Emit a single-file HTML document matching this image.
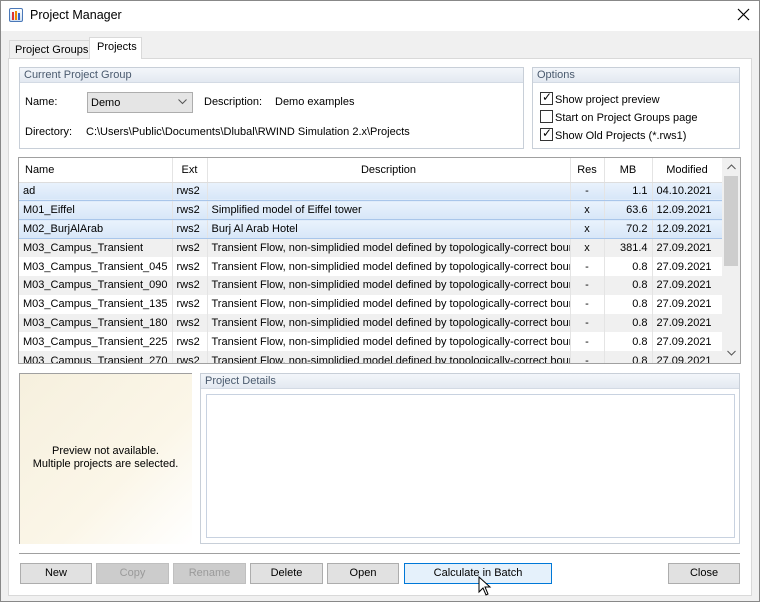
<!DOCTYPE html>
<html><head><style>
*{box-sizing:border-box;margin:0;padding:0}
body{width:760px;height:602px;background:#f0f0f0;font-family:"Liberation Sans",sans-serif;font-size:11px;color:#000;position:relative;overflow:hidden}
.a{position:absolute;white-space:nowrap}
.win{left:0;top:0;width:760px;height:602px;border:1px solid #888}
.title{left:1px;top:1px;width:758px;height:30px;background:#fff}
.pane{left:8px;top:58px;width:744px;height:538px;background:#fff;border:1px solid #d9d9d9}
.gb{border:1px solid #c8cfd8;background:#fff}
.gh{position:absolute;left:0;top:0;right:0;height:15px;background:linear-gradient(#f3f6fa,#e3e9f1);border-bottom:1px solid #d3dae4;color:#4a5a6e;padding-left:4px;line-height:14px}
.btn{position:absolute;top:563px;height:21px;border:1px solid #adadad;background:#e1e1e1;text-align:center;line-height:19px}
.dis{color:#9a9a9a;background:#ccc;border-color:#bfbfbf}
.tw{position:absolute;left:19px;top:158px;width:703px;height:205px;overflow:hidden}
table{border-collapse:collapse;width:703px;table-layout:fixed}
td{height:18.8px;padding:0 4px;white-space:nowrap;overflow:hidden;border-right:1px solid #e4e4e4;text-overflow:clip}
th{height:24px;font-weight:normal;border-right:1px solid #e4e4e4;border-bottom:1px solid #ddd}
tr.s td{background:linear-gradient(#e9f2fc,#d7e6f8);border-top:1px solid #a9c6ea;border-bottom:1px solid #a9c6ea}
tr.g td{background:#f0f0f0}
.r{text-align:right}.c{text-align:center}
.cb{display:inline-block;width:13px;height:13px;border:1px solid #333;vertical-align:-2px;margin-right:2px;position:relative}
</style></head><body>
<div class="a win"></div>
<div class="a title"></div>
<div class="a" style="left:9px;top:8px;width:14px;height:14px;border:1px solid #4a78b8;background:linear-gradient(#fff,#cfe0f4);border-radius:2px">
<div class="a" style="left:2px;top:3px;width:2px;height:8px;background:#d33"></div><div class="a" style="left:5px;top:2px;width:2px;height:9px;background:#e80"></div><div class="a" style="left:8px;top:4px;width:2px;height:7px;background:#36c"></div></div>
<div class="a" style="left:30px;top:8px;font-size:12.5px">Project Manager</div>
<svg class="a" style="left:737px;top:8px" width="13" height="13"><path d="M1 1L12 12M12 1L1 12" stroke="#000" stroke-width="1.2"/></svg>
<div class="a" style="left:9px;top:40px;width:81px;height:19px;border:1px solid #d9d9d9;background:#f0f0f0;padding:3px 0 0 5px">Project Groups</div>
<div class="a pane"></div>
<div class="a" style="left:89px;top:37px;width:53px;height:22px;border:1px solid #d9d9d9;border-bottom:none;background:#fff;padding:3px 0 0 7px">Projects</div>

<div class="a gb" style="left:19px;top:67px;width:505px;height:82px"><div class="gh">Current Project Group</div></div>
<div class="a" style="left:25px;top:96px">Name:</div>
<div class="a" style="left:87px;top:92px;width:106px;height:21px;border:1px solid #adadad;background:#e5e5e5;padding:4px 0 0 3px">Demo<svg class="a" style="right:5px;top:6px" width="9" height="6"><path d="M0.5 0.5L4.5 4.5L8.5 0.5" fill="none" stroke="#555"/></svg></div>
<div class="a" style="left:204px;top:96px">Description:</div>
<div class="a" style="left:275px;top:96px">Demo examples</div>
<div class="a" style="left:25px;top:126px">Directory:</div>
<div class="a" style="left:86px;top:126px">C:\Users\Public\Documents\Dlubal\RWIND Simulation 2.x\Projects</div>

<div class="a gb" style="left:532px;top:67px;width:208px;height:82px"><div class="gh">Options</div></div>
<div class="a" style="left:540px;top:92px"><span class="cb"><span class="a" style="left:1px;top:-3px;font-size:12px">✓</span></span>Show project preview</div>
<div class="a" style="left:540px;top:110px"><span class="cb"></span>Start on Project Groups page</div>
<div class="a" style="left:540px;top:128px"><span class="cb"><span class="a" style="left:1px;top:-3px;font-size:12px">✓</span></span>Show Old Projects (*.rws1)</div>

<div class="a" style="left:18px;top:157px;width:723px;height:207px;border:1px solid #a0a0a0;background:#fff"></div>
<div class="tw"><table>
<colgroup><col style="width:153px"><col style="width:35px"><col style="width:363px"><col style="width:34px"><col style="width:48px"><col style="width:70px"></colgroup>
<tr><th style="text-align:left;padding-left:6px">Name</th><th>Ext</th><th>Description</th><th>Res</th><th>MB</th><th>Modified</th></tr>
<tr class="s"><td>ad</td><td>rws2</td><td></td><td class="c">-</td><td class="r">1.1</td><td>04.10.2021</td></tr>
<tr class="s"><td>M01_Eiffel</td><td>rws2</td><td>Simplified model of Eiffel tower</td><td class="c">x</td><td class="r">63.6</td><td>12.09.2021</td></tr>
<tr class="s"><td>M02_BurjAlArab</td><td>rws2</td><td>Burj Al Arab Hotel</td><td class="c">x</td><td class="r">70.2</td><td>12.09.2021</td></tr>
<tr class="g"><td>M03_Campus_Transient</td><td>rws2</td><td>Transient Flow, non-simplidied model defined by topologically-correct bound</td><td class="c">x</td><td class="r">381.4</td><td>27.09.2021</td></tr>
<tr><td>M03_Campus_Transient_045</td><td>rws2</td><td>Transient Flow, non-simplidied model defined by topologically-correct bound</td><td class="c">-</td><td class="r">0.8</td><td>27.09.2021</td></tr>
<tr class="g"><td>M03_Campus_Transient_090</td><td>rws2</td><td>Transient Flow, non-simplidied model defined by topologically-correct bound</td><td class="c">-</td><td class="r">0.8</td><td>27.09.2021</td></tr>
<tr><td>M03_Campus_Transient_135</td><td>rws2</td><td>Transient Flow, non-simplidied model defined by topologically-correct bound</td><td class="c">-</td><td class="r">0.8</td><td>27.09.2021</td></tr>
<tr class="g"><td>M03_Campus_Transient_180</td><td>rws2</td><td>Transient Flow, non-simplidied model defined by topologically-correct bound</td><td class="c">-</td><td class="r">0.8</td><td>27.09.2021</td></tr>
<tr><td>M03_Campus_Transient_225</td><td>rws2</td><td>Transient Flow, non-simplidied model defined by topologically-correct bound</td><td class="c">-</td><td class="r">0.8</td><td>27.09.2021</td></tr>
<tr class="g"><td>M03_Campus_Transient_270</td><td>rws2</td><td>Transient Flow, non-simplidied model defined by topologically-correct bound</td><td class="c">-</td><td class="r">0.8</td><td>27.09.2021</td></tr>
</table></div>
<div class="a" style="left:722px;top:158px;width:18px;height:205px;background:#f0f0f0"></div>
<div class="a" style="left:724px;top:176px;width:14px;height:90px;background:#cdcdcd"></div>
<svg class="a" style="left:727px;top:164px" width="9" height="6"><path d="M0.5 5L4.5 1L8.5 5" fill="none" stroke="#555"/></svg>
<svg class="a" style="left:727px;top:350px" width="9" height="6"><path d="M0.5 1L4.5 5L8.5 1" fill="none" stroke="#555"/></svg>

<div class="a" style="left:19px;top:373px;width:173px;height:171px;border-left:1px solid #a0a0a0;border-top:1px solid #a0a0a0;background:linear-gradient(135deg,#f6f0de,#fbf6e8 60%,#fff)"></div>
<div class="a" style="left:19px;top:445px;width:173px;text-align:center;line-height:13px">Preview not available.<br>Multiple projects are selected.</div>
<div class="a gb" style="left:200px;top:373px;width:540px;height:171px"><div class="gh">Project Details</div></div>
<div class="a" style="left:206px;top:394px;width:529px;height:144px;border:1px solid #c8d2e0"></div>
<div class="a" style="left:19px;top:553px;width:721px;height:2px;border-top:1px solid #a0a0a0;border-bottom:1px solid #fff"></div>

<div class="btn" style="left:20px;width:72px">New</div>
<div class="btn dis" style="left:96px;width:73px">Copy</div>
<div class="btn dis" style="left:173px;width:73px">Rename</div>
<div class="btn" style="left:250px;width:73px">Delete</div>
<div class="btn" style="left:327px;width:72px">Open</div>
<div class="btn" style="left:404px;width:148px;border-color:#0078d7;background:#e5f1fb">Calculate in Batch</div>
<div class="btn" style="left:668px;width:72px">Close</div>
<svg class="a" style="left:478px;top:576px" width="14" height="22"><path d="M1 1 L1 16 L5 12 L8 19 L10 18 L7 11 L12 11 Z" fill="#fff" stroke="#000" stroke-width="1"/></svg>
</body></html>
